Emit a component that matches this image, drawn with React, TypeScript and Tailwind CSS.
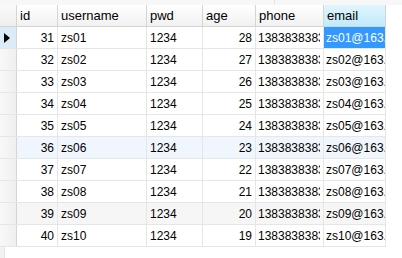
const rows = [
  { id: 31, username: 'zs01', pwd: '1234', age: 28 },
  { id: 32, username: 'zs02', pwd: '1234', age: 27 },
  { id: 33, username: 'zs03', pwd: '1234', age: 26 },
  { id: 34, username: 'zs04', pwd: '1234', age: 25 },
  { id: 35, username: 'zs05', pwd: '1234', age: 24 },
  { id: 36, username: 'zs06', pwd: '1234', age: 23 },
  { id: 37, username: 'zs07', pwd: '1234', age: 22 },
  { id: 38, username: 'zs08', pwd: '1234', age: 21 },
  { id: 39, username: 'zs09', pwd: '1234', age: 20 },
  { id: 40, username: 'zs10', pwd: '1234', age: 19 },
];

const rowBg = (i: number) => {
  if (i === 5) return 'bg-[#f0f6fd]';
  if (i === 8) return 'bg-[#f6f6f6]';
  return 'bg-white';
};

export default function App() {
  return (
    <div
      className="w-[402px] h-[258px] bg-white overflow-hidden text-[12px] text-black leading-none"
      style={{ fontFamily: '"Liberation Sans", Arial, sans-serif' }}
    >
      {/* top strip */}
      <div className="h-[5px] flex bg-[#f7f7f7]">
        <div className="w-[275px] border-r border-[#e6e6e6]" />
      </div>

      {/* header */}
      <div className="flex h-[22px] w-[386px] border-b border-[#d5d5d5] bg-gradient-to-b from-white to-[#f1f1f1]">
        <div className="w-[17px] shrink-0 border-r border-[#d5d5d5] bg-gradient-to-b from-[#fafafa] to-[#eeeeee]" />
        <div className="w-[41px] shrink-0 border-r border-[#d5d5d5] px-[3px] flex items-center text-[13px]">id</div>
        <div className="w-[89px] shrink-0 border-r border-[#d5d5d5] px-[3px] flex items-center text-[13px]">username</div>
        <div className="w-[56px] shrink-0 border-r border-[#d5d5d5] px-[3px] flex items-center text-[13px]">pwd</div>
        <div className="w-[53px] shrink-0 border-r border-[#d5d5d5] px-[3px] flex items-center text-[13px]">age</div>
        <div className="w-[68px] shrink-0 border-r border-[#d5d5d5] px-[3px] flex items-center text-[13px]">phone</div>
        <div className="w-[62px] shrink-0 border-r border-[#d5d5d5] px-[3px] flex items-center text-[13px] bg-gradient-to-b from-[#e0f5fd] to-[#c2eafb]">email</div>
      </div>

      {/* rows */}
      {rows.map((r, i) => (
        <div key={r.id} className={`flex h-[22px] w-[386px] border-b border-[#e6e6e6] ${rowBg(i)}`}>
          <div
            className={`w-[17px] shrink-0 border-r border-[#d5d5d5] flex items-center pl-[4px] ${
              i === 0 ? 'bg-[#dcebf8]' : 'bg-gradient-to-r from-[#f8f8f8] to-[#efefef]'
            }`}
          >
            {i === 0 && (
              <svg width="6" height="10" viewBox="0 0 6 10">
                <path d="M0 0 L6 5 L0 10 Z" fill="#000" />
              </svg>
            )}
          </div>
          <div className="w-[41px] shrink-0 border-r border-[#e6e6e6] px-[3px] flex items-center justify-end">{r.id}</div>
          <div className="w-[89px] shrink-0 border-r border-[#e6e6e6] px-[3px] flex items-center">{r.username}</div>
          <div className="w-[56px] shrink-0 border-r border-[#e6e6e6] px-[3px] flex items-center">{r.pwd}</div>
          <div className="w-[53px] shrink-0 border-r border-[#e6e6e6] px-[3px] flex items-center justify-end">{r.age}</div>
          <div className="w-[68px] shrink-0 border-r border-[#e6e6e6] pl-[2px] pr-[3px] flex items-center">
            <div className="w-full overflow-hidden whitespace-nowrap">13838383838</div>
          </div>
          <div
            className={`w-[62px] shrink-0 border-r border-[#e6e6e6] pl-[2px] flex items-center overflow-hidden whitespace-nowrap ${
              i === 0 ? 'bg-[#3399ff] text-white' : ''
            }`}
          >
            {r.username}@163.com
          </div>
        </div>
      ))}

      {/* empty area below */}
      <div className="flex h-[12px]">
        <div className="w-[5px] bg-[#f2f2f2] border-r border-[#e4e4e4]" />
      </div>
    </div>
  );
}
